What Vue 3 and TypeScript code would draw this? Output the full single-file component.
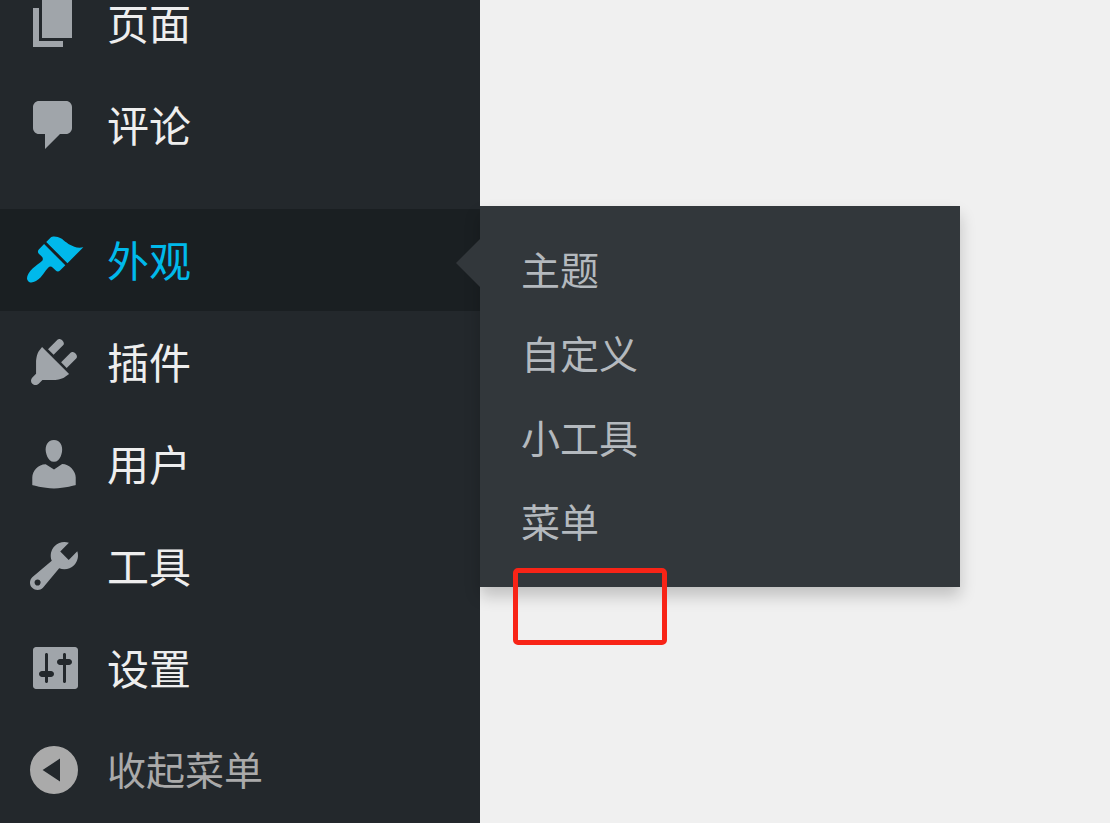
<script setup lang="ts">
interface MenuItem {
  label: string
  icon: string
  current?: boolean
  children?: string[]
}

const groups: MenuItem[][] = [
  [
    { label: '页面', icon: 'M6 15V2h10v13H6zm-1 1h8v2H3V5h2v11z' },
    {
      label: '评论',
      icon: 'M5 2h9c1.1 0 2 .9 2 2v7c0 1.1-.9 2-2 2h-2l-5 5v-5H5c-1.1 0-2-.9-2-2V4c0-1.1.9-2 2-2z',
    },
  ],
  [
    {
      label: '外观',
      icon: 'M14.48 11.06L7.41 3.99l1.5-1.5c.5-.56 2.3-.47 3.51.32 1.21.8 1.43 1.28 2.91 2.1 1.18.64 2.45 1.26 4.45.85zm-.71.71L6.7 4.7 4.93 6.47c-.39.39-.39 1.02 0 1.41l1.06 1.06c.39.39.39 1.03 0 1.42-.6.6-1.43 1.11-2.21 1.69-.35.26-.7.53-1.01.84C1.43 14.23.4 16.08 1.4 17.07c.99 1 2.84-.03 4.18-1.36.31-.31.58-.66.85-1.02.57-.78 1.08-1.61 1.69-2.21.39-.39 1.02-.39 1.41 0l1.06 1.06c.39.39 1.02.39 1.41 0z',
      current: true,
      children: ['主题', '自定义', '小工具', '菜单'],
    },
    {
      label: '插件',
      icon: 'M13.11 4.36L9.87 7.6 8 5.73l3.24-3.24c.35-.34 1.05-.2 1.56.32.52.51.66 1.21.31 1.55zm-8 1.77l.91-1.12 9.01 9.01-1.19.84c-.71.71-2.63 1.16-3.82 1.16H6.14L4.9 17.26c-.59.59-1.54.59-2.12 0-.59-.58-.59-1.53 0-2.12l1.24-1.24v-3.88c0-1.13.4-3.19 1.09-3.89zm7.26 3.97l3.24-3.24c.34-.35 1.04-.21 1.55.31.52.51.66 1.21.31 1.55l-3.24 3.25z',
    },
    {
      label: '用户',
      icon: 'M10 9.25c-2.27 0-2.73-3.44-2.73-3.44C7 4.02 7.82 2 9.97 2c2.16 0 2.98 2.02 2.71 3.81 0 0-.41 3.44-2.68 3.44zm0 2.57L12.72 10c2.39 0 4.52 2.33 4.52 4.53v2.49s-3.65 1.13-7.24 1.13c-3.65 0-7.24-1.13-7.24-1.13v-2.49c0-2.25 1.94-4.48 4.47-4.48z',
    },
    {
      label: '工具',
      icon: 'M16.68 9.77c-1.34 1.34-3.3 1.67-4.95.99l-5.41 6.52c-.99.99-2.59.99-3.58 0s-.99-2.59 0-3.57l6.52-5.42c-.68-1.65-.35-3.61.99-4.95 1.28-1.28 3.12-1.62 4.72-1.06l-2.89 2.89 2.82 2.82 2.86-2.87c.53 1.58.18 3.39-1.08 4.65zM3.81 16.21c.4.39 1.04.39 1.43 0 .4-.4.4-1.04 0-1.43-.39-.4-1.03-.4-1.43 0-.39.39-.39 1.03 0 1.43z',
    },
    {
      label: '设置',
      icon: 'M18 16V4c0-.55-.45-1-1-1H4c-.55 0-1 .45-1 1v12c0 .55.45 1 1 1h13c.55 0 1-.45 1-1zM8 11h1c.55 0 1 .45 1 1s-.45 1-1 1H8v1.5c0 .28-.22.5-.5.5s-.5-.22-.5-.5V13H6c-.55 0-1-.45-1-1s.45-1 1-1h1V5.5c0-.28.22-.5.5-.5s.5.22.5.5V11zm5-2h-1c-.55 0-1-.45-1-1s.45-1 1-1h1V5.5c0-.28.22-.5.5-.5s.5.22.5.5V7h1c.55 0 1 .45 1 1s-.45 1-1 1h-1v5.5c0 .28-.22.5-.5.5s-.5-.22-.5-.5V9z',
    },
  ],
]
</script>

<template>
  <div class="admin">
    <nav class="sidebar" aria-label="主菜单">
      <ul v-for="(group, g) in groups" :key="g" class="group">
        <li v-for="item in group" :key="item.label" class="item" :class="{ current: item.current }">
          <a href="#" class="row">
            <svg class="icon" viewBox="0 0 20 20" aria-hidden="true">
              <path :d="item.icon" fill-rule="evenodd" />
            </svg>
            <span class="label">{{ item.label }}</span>
          </a>
          <div v-if="item.children" class="flyout">
            <ul class="submenu">
              <li v-for="child in item.children" :key="child">
                <a href="#" class="sublink">{{ child }}</a>
              </li>
            </ul>
            <div class="marker" aria-hidden="true"></div>
          </div>
        </li>
      </ul>
      <button type="button" class="row collapse">
        <svg class="icon" viewBox="0 0 20 20" aria-hidden="true">
          <path fill-rule="evenodd" d="M10 2a8 8 0 1 0 0 16a8 8 0 1 0 0-16zM12 6.2v7.6L6.2 10z" />
        </svg>
        <span class="label">收起菜单</span>
      </button>
    </nav>
    <main class="content"></main>
  </div>
</template>

<style>
body {
  background: #f0f0f0;
}
</style>

<style scoped>
.admin {
  display: flex;
  height: 100vh;
  overflow: hidden;
  font-family: "Noto Sans CJK SC", sans-serif;
}

.sidebar {
  position: relative;
  z-index: 1;
  flex: 0 0 480px;
  background: #23282c;
}

.content {
  flex: 1;
  background: #f0f0f0;
}

.group {
  margin: 0 0 33px;
  padding: 0;
  list-style: none;
}

/* The list is scrolled so that its first row is partly out of view. */
.group:first-child {
  margin-top: -28px;
}

.group:last-of-type {
  margin-bottom: 0;
}

.item {
  position: relative;
}

.row {
  display: flex;
  align-items: center;
  gap: 23px;
  box-sizing: border-box;
  width: 100%;
  height: 102px;
  padding: 0 24px;
  color: #eee;
  font-size: 42px;
  line-height: 42px;
  text-decoration: none;
}

.label {
  padding-bottom: 2px;
}

.icon {
  flex: none;
  width: 60px;
  height: 60px;
  fill: #a0a5aa;
}

.current .row {
  background: #1a1f22;
  color: #00b9eb;
}

.current .icon {
  fill: #00b9eb;
}

.collapse {
  border: 0;
  background: none;
  color: #aaa;
  font-family: inherit;
  font-size: 39px;
  text-align: left;
}

.collapse .label {
  padding-bottom: 4px;
}

.collapse .icon {
  fill: #aaa;
}

.flyout {
  position: absolute;
  top: -3px;
  left: 100%;
  width: 480px;
  background: #32373b;
  box-shadow: 0 9px 15px rgba(0, 0, 0, 0.2);
}

.flyout::before {
  content: "";
  position: absolute;
  top: 33px;
  right: 100%;
  border: 24px solid transparent;
  border-left-width: 0;
  border-right-color: #32373b;
}

.submenu {
  margin: 0;
  padding: 20px 0 25px;
  list-style: none;
}

.sublink {
  display: block;
  padding: 15px 41px;
  color: #b4b9be;
  font-size: 39px;
  line-height: 54px;
  text-decoration: none;
}

.marker {
  position: absolute;
  top: 362px;
  left: 33px;
  box-sizing: border-box;
  width: 154px;
  height: 77px;
  border: 5px solid #f82417;
  border-radius: 5px;
}
</style>
